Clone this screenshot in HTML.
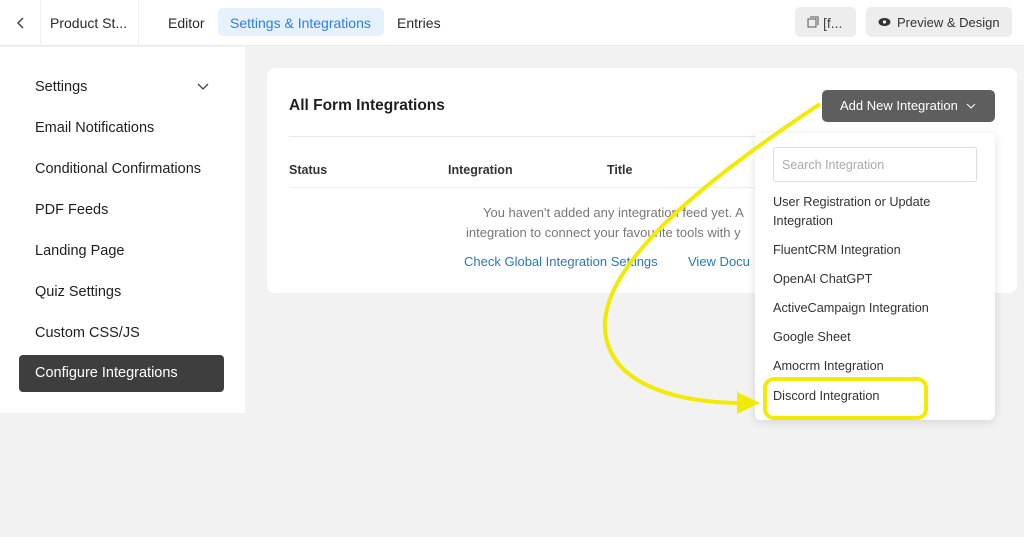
<!DOCTYPE html>
<html><head><meta charset="utf-8"><style>
*{margin:0;padding:0;box-sizing:border-box}
body{width:1024px;height:537px;background:#f2f2f2;font-family:"Liberation Sans",sans-serif;position:relative;overflow:hidden;color:#1e1f21}
.a{position:absolute;white-space:nowrap}
.top{left:0;top:0;width:1024px;height:46px;background:#fff;border-bottom:1px solid #e8e8e8}
.t{font-size:14px;color:#2a2a2a}
.side{left:0;top:47px;width:245px;height:366px;background:#fff}
.si{left:35px;font-size:14.5px;color:#1e1f21}
.card{left:267px;top:68px;width:750px;height:225px;background:#fff;border-radius:8px}
.dd{left:755px;top:133px;width:240px;height:287px;background:#fff;border-radius:6px;box-shadow:0 2px 10px rgba(0,0,0,.12)}
.di{left:773px;font-size:12.7px;color:#333}
</style></head><body>
<div class="a top"></div>
<div class="a" style="left:40px;top:0;width:1px;height:46px;background:#eee"></div>
<div class="a" style="left:138px;top:0;width:1px;height:46px;background:#eee"></div>
<svg class="a" style="left:16px;top:16px" width="10" height="14"><path d="M7 2L2 7l5 5" stroke="#444" stroke-width="1.5" fill="none"/></svg>
<div class="a t" style="left:50px;top:15px">Product St...</div>
<div class="a t" style="left:168px;top:15px">Editor</div>
<div class="a" style="left:218px;top:8px;width:166px;height:28px;background:#e6f1fd;border-radius:5px"></div>
<div class="a t" style="left:230px;top:15px;color:#2e7fdd">Settings &amp; Integrations</div>
<div class="a t" style="left:397px;top:15px">Entries</div>
<div class="a" style="left:795px;top:7px;width:61px;height:30px;background:#ededed;border-radius:5px"></div>
<svg class="a" style="left:807px;top:16px" width="12" height="12"><rect x="1" y="3" width="8" height="8" fill="none" stroke="#555"/><path d="M3 1h8v8" fill="none" stroke="#555"/></svg>
<div class="a t" style="left:823px;top:15px;color:#444">[f...</div>
<div class="a" style="left:866px;top:7px;width:146px;height:30px;background:#ededed;border-radius:5px"></div>
<svg class="a" style="left:878px;top:17px" width="13" height="10"><ellipse cx="6.5" cy="5" rx="6" ry="4" fill="#333"/><circle cx="6.5" cy="5" r="1.6" fill="#fff"/></svg>
<div class="a" style="left:897px;top:15px;font-size:13px;color:#333">Preview &amp; Design</div>

<div class="a side"></div>
<div class="a si" style="top:79px">Settings</div>
<svg class="a" style="left:197px;top:83px" width="12" height="8"><path d="M1 1l5 5 5-5" stroke="#444" stroke-width="1.3" fill="none"/></svg>
<div class="a si" style="top:120px">Email Notifications</div>
<div class="a si" style="top:161px">Conditional Confirmations</div>
<div class="a si" style="top:202px">PDF Feeds</div>
<div class="a si" style="top:243px">Landing Page</div>
<div class="a si" style="top:284px">Quiz Settings</div>
<div class="a si" style="top:325px">Custom CSS/JS</div>
<div class="a" style="left:19px;top:355px;width:205px;height:37px;background:#3e3e3e;border-radius:4px"></div>
<div class="a si" style="top:365px;color:#fff">Configure Integrations</div>

<div class="a card"></div>
<div class="a" style="left:289px;top:97px;font-size:15.5px;font-weight:bold">All Form Integrations</div>
<div class="a" style="left:822px;top:90px;width:173px;height:32px;background:#5e5e5e;border-radius:5px"></div>
<div class="a" style="left:840px;top:98px;font-size:13px;color:#fff">Add New Integration</div>
<svg class="a" style="left:966px;top:103px" width="10" height="6"><path d="M1 1l4 4 4-4" stroke="#fff" fill="none"/></svg>
<div class="a" style="left:289px;top:136px;width:470px;height:1px;background:#e6e6e6"></div>
<div class="a" style="left:289px;top:163px;font-size:12.5px;font-weight:bold;color:#333">Status</div>
<div class="a" style="left:448px;top:163px;font-size:12.5px;font-weight:bold;color:#333">Integration</div>
<div class="a" style="left:607px;top:163px;font-size:12.5px;font-weight:bold;color:#333">Title</div>
<div class="a" style="left:289px;top:187px;width:470px;height:1px;background:#ececec"></div>
<div class="a" style="left:483px;top:205px;font-size:13px;color:#777">You haven't added any integration feed yet. A</div>
<div class="a" style="left:466px;top:225px;font-size:13px;color:#777">integration to connect your favourite tools with y</div>
<div class="a" style="left:464px;top:254px;font-size:13px;color:#2a7ab0">Check Global Integration Settings</div>
<div class="a" style="left:688px;top:254px;font-size:13px;color:#2a7ab0">View Docu</div>

<div class="a dd"></div>
<div class="a" style="left:773px;top:147px;width:204px;height:35px;border:1px solid #dcdcdc;border-radius:3px"></div>
<div class="a" style="left:782px;top:158px;font-size:12.5px;color:#aaa">Search Integration</div>
<div class="a di" style="top:195px">User Registration or Update</div>
<div class="a di" style="top:214px">Integration</div>
<div class="a di" style="top:243px">FluentCRM Integration</div>
<div class="a di" style="top:272px">OpenAI ChatGPT</div>
<div class="a di" style="top:301px">ActiveCampaign Integration</div>
<div class="a di" style="top:330px">Google Sheet</div>
<div class="a di" style="top:359px">Amocrm Integration</div>
<div class="a di" style="top:389px">Discord Integration</div>

<svg class="a" style="left:0;top:0" width="1024" height="537">
<path d="M820 104 C720 170 600 260 605 330 C610 390 690 403 740 403" stroke="#f2ea00" stroke-width="4" fill="none"/>
<path d="M737 392 L760 403 L737 414 Z" fill="#f2ea00"/>
<rect x="765" y="379" width="161" height="39" rx="9" fill="none" stroke="#f2ea00" stroke-width="4"/>
</svg>
</body></html>
